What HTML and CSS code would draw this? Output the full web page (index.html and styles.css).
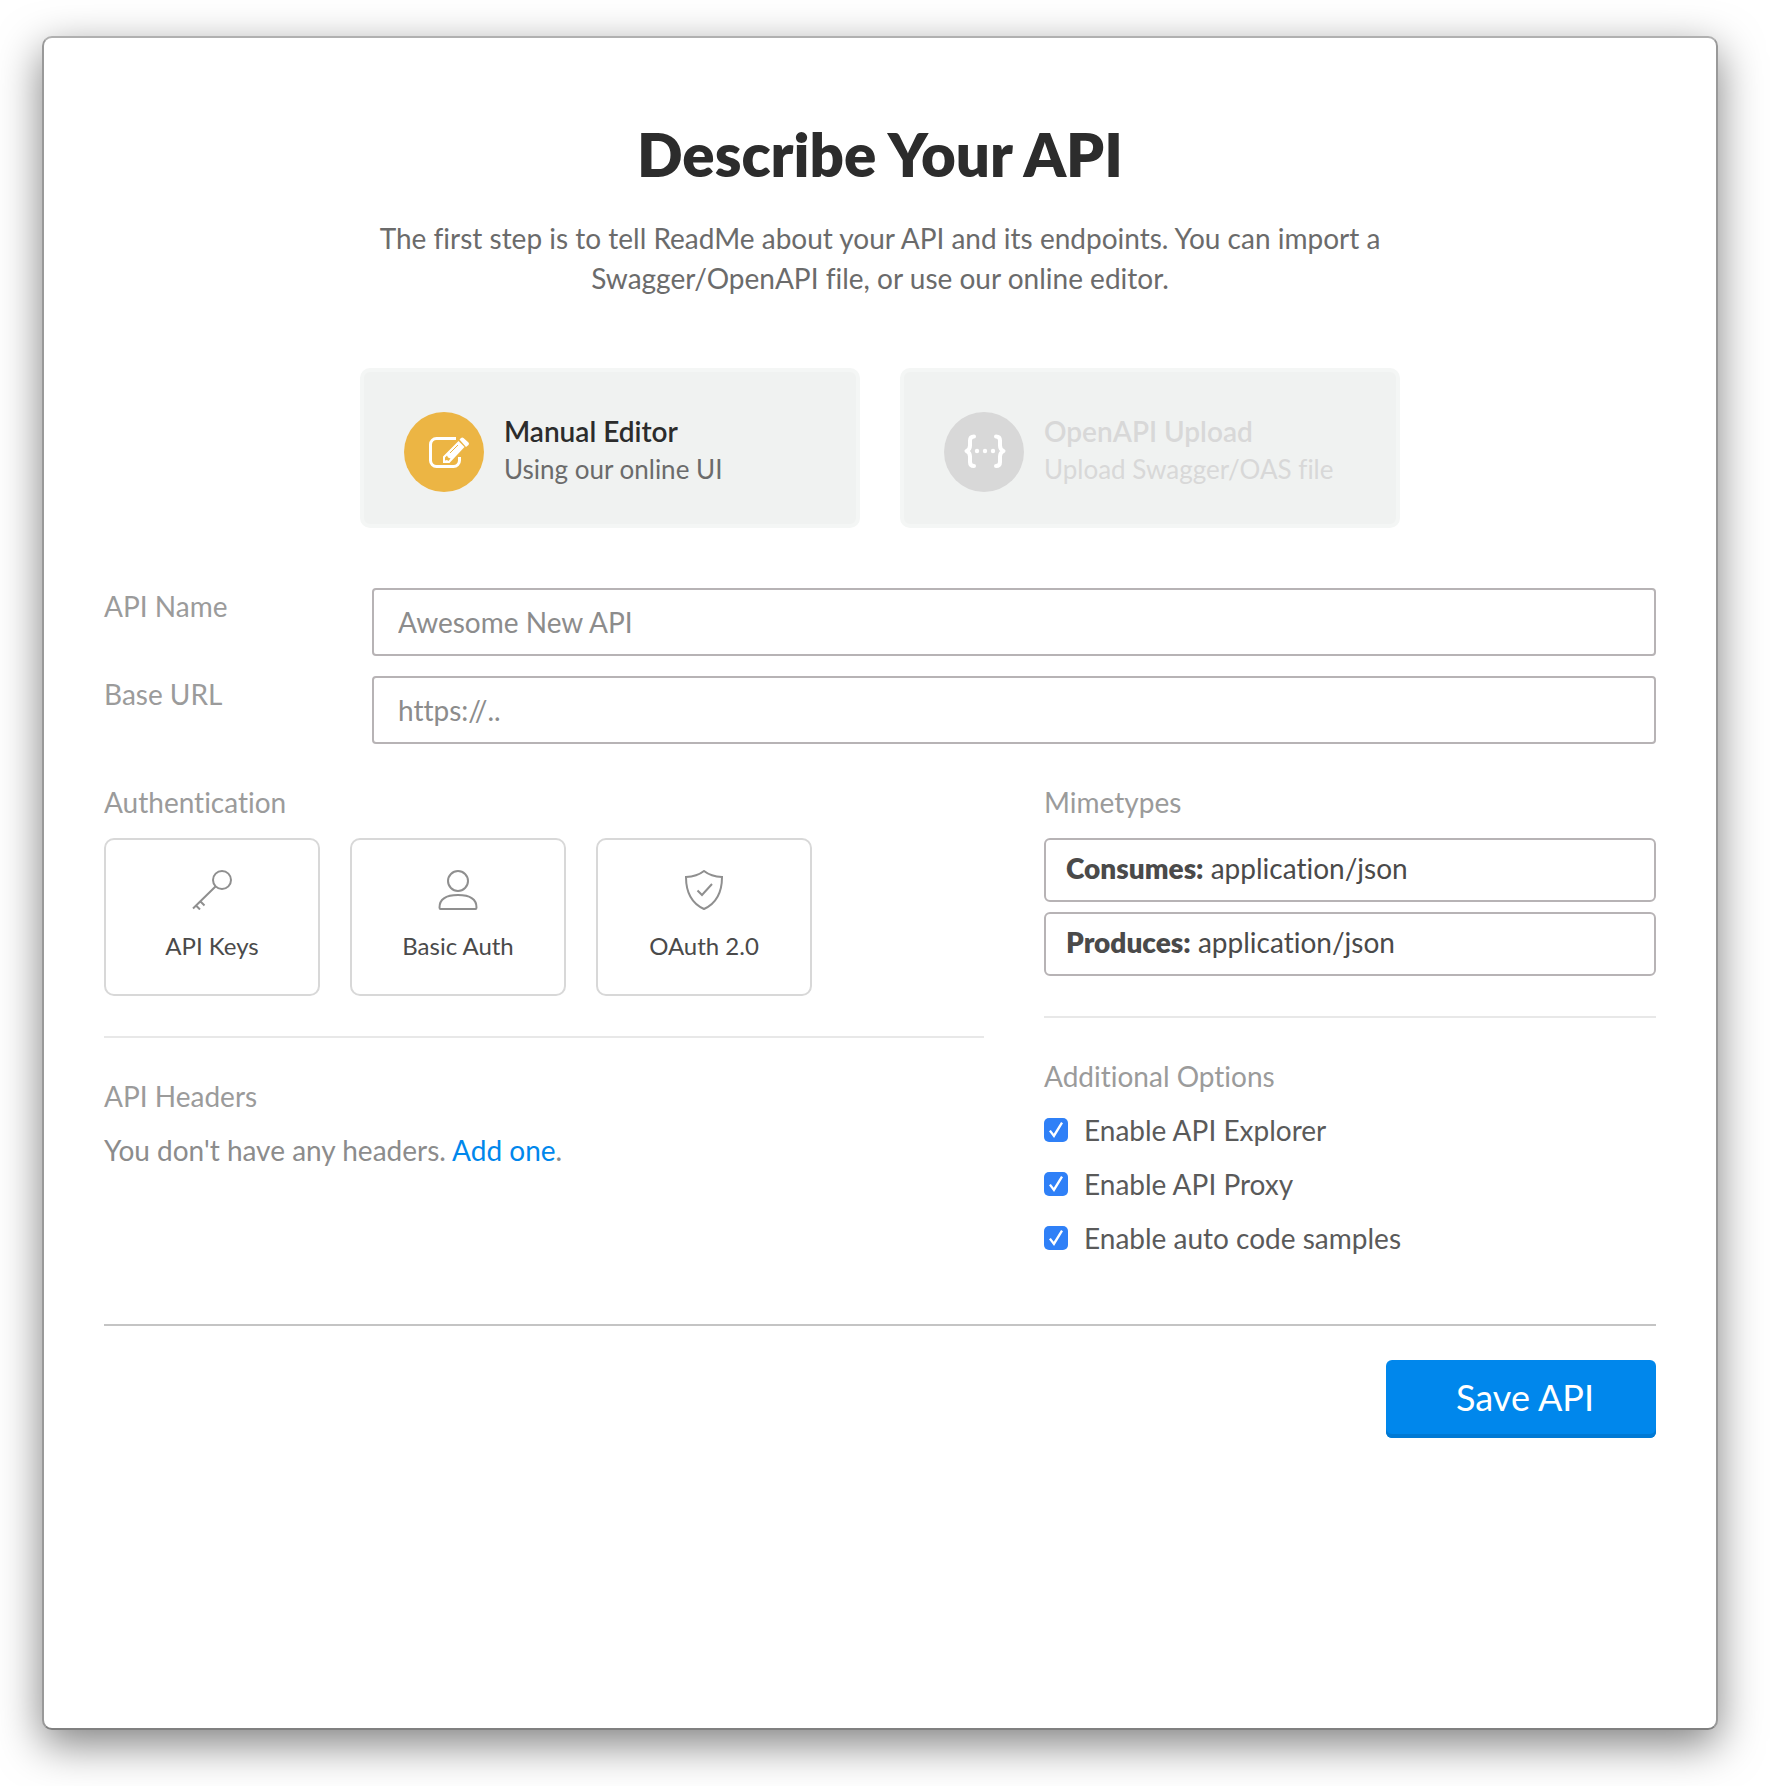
FILE: index.html
```html
<!DOCTYPE html>
<html lang="en">
<head>
<meta charset="utf-8">
<meta name="viewport" content="width=device-width, initial-scale=1">
<title>Describe Your API</title>
<link rel="stylesheet" href="styles.css">
</head>
<body>
<main class="window">
  <header class="intro">
    <h1 class="intro-title">Describe Your API</h1>
    <p class="intro-text">The first step is to tell ReadMe about your API and its endpoints. You can import a Swagger/OpenAPI file, or use our online editor.</p>
  </header>

  <div class="methods">
    <button type="button" class="method">
      <svg class="method-icon" viewBox="0 0 80 80" aria-hidden="true">
        <circle cx="40" cy="40" r="40" fill="#ecb544"/>
        <path d="M52 26.500H32.500a6 6 0 0 0-6 6v16a6 6 0 0 0 6 6h17a6 6 0 0 0 6-6V45" fill="none" stroke="#fff" stroke-width="3"/>
        <path d="M39 51v-6.500l15.500-15.500 6 6L45.500 51zM55.500 27.500l1.500-1.500q1.200-1 2.500 0l5 4.500q1 1.200 0 2.500L62 35z" fill="#fff"/>
        <path d="M46 41l8-8" stroke="#ecb544" stroke-width="1"/>
        <path d="M41 45.500l2-2 1 2 2.500 1-2 2.500-1.500-1-2 .500z" fill="#ecb544"/>
      </svg>
      <span class="method-text">
        <span class="method-name">Manual Editor</span>
        <span class="method-note">Using our online UI</span>
      </span>
    </button>
    <button type="button" class="method method-off">
      <svg class="method-icon" viewBox="0 0 80 80" aria-hidden="true">
        <circle cx="40" cy="40" r="40" fill="#d8d8d8"/>
        <g fill="none" stroke="#fff" stroke-width="4" stroke-linecap="round" stroke-linejoin="round">
          <path d="M30 24.500q-4 0-4 4v5q0 4-3.500 5.500 3.500 1.500 3.500 5.500v5.500q0 4 4 4"/>
          <path d="M52 24.500q4 0 4 4v5q0 4 3.500 5.500-3.500 1.500-3.500 5.500v5.500q0 4-4 4"/>
        </g>
        <g fill="#fff"><circle cx="33" cy="39" r="2.200"/><circle cx="41" cy="39" r="2.200"/><circle cx="49" cy="39" r="2.200"/></g>
      </svg>
      <span class="method-text">
        <span class="method-name">OpenAPI Upload</span>
        <span class="method-note">Upload Swagger/OAS file</span>
      </span>
    </button>
  </div>

  <form class="form">
    <div class="field">
      <label class="label" for="api-name">API Name</label>
      <input class="input" id="api-name" type="text" placeholder="Awesome New API">
    </div>
    <div class="field">
      <label class="label" for="base-url">Base URL</label>
      <input class="input" id="base-url" type="text" placeholder="https://..">
    </div>

    <div class="columns">
      <div class="column">
        <section class="section">
          <h2 class="label">Authentication</h2>
          <div class="auths">
            <button type="button" class="auth">
              <svg class="auth-icon" viewBox="0 0 40 40" aria-hidden="true"><circle cx="30" cy="10" r="9"/><path d="M23.500 16.500L1 38.500M4 35.500l4 4M8.500 31.500l4 4"/></svg>
              API Keys
            </button>
            <button type="button" class="auth">
              <svg class="auth-icon" viewBox="0 0 40 40" aria-hidden="true"><circle cx="20" cy="11" r="10"/><path d="M2.500 39q-1 0-1-1.500C1.500 29 8 25 20 25s18.500 4 18.500 12.500q0 1.500-1 1.500z"/></svg>
              Basic Auth
            </button>
            <button type="button" class="auth">
              <svg class="auth-icon" viewBox="0 0 40 40" aria-hidden="true"><path d="M20 1q7 5.500 18 6C38 24 31 34 20 39 9 34 2 24 2 7q11-.500 18-6zM13.500 20.500l4.500 4.500 10-11"/></svg>
              OAuth 2.0
            </button>
          </div>
        </section>
        <section class="section section-ruled">
          <h2 class="label">API Headers</h2>
          <p class="empty">You don't have any headers. <a class="link" href="#add-header">Add one</a>.</p>
        </section>
      </div>
      <div class="column">
        <section class="section">
          <h2 class="label">Mimetypes</h2>
          <div class="mimes">
            <button type="button" class="mime"><b class="mime-kind">Consumes:</b> application/json</button>
            <button type="button" class="mime"><b class="mime-kind">Produces:</b> application/json</button>
          </div>
        </section>
        <section class="section section-ruled">
          <h2 class="label">Additional Options</h2>
          <div class="options">
            <label class="option"><input class="check" type="checkbox" checked>Enable API Explorer</label>
            <label class="option"><input class="check" type="checkbox" checked>Enable API Proxy</label>
            <label class="option"><input class="check" type="checkbox" checked>Enable auto code samples</label>
          </div>
        </section>
      </div>
    </div>

    <footer class="actions">
      <button type="submit" class="save">Save API</button>
    </footer>
  </form>
</main>
</body>
</html>
```
FILE: styles.css
```css
* {
  box-sizing: border-box;
}

body {
  margin: 0;
  padding: 36px 54px 56px 42px;
  background: #fff;
  color: #4a4a4a;
  font-family: Lato, "Open Sans", sans-serif;
  font-size: 28px;
  font-variant-ligatures: none;
  line-height: 40px;
}

h1,
h2,
p {
  margin: 0;
}

button,
input {
  font: inherit;
  font-variant-ligatures: none;
  color: inherit;
}

button {
  padding: 0;
  cursor: pointer;
}

.window {
  min-height: calc(100vh - 92px);
  padding: 80px 60px 60px;
  border: 2px solid;
  border-color: #b0b0b0 #999 #808080;
  border-radius: 10px;
  background: #fff;
  box-shadow: 0 14px 44px rgba(0, 0, 0, 0.5);
}

.intro {
  max-width: 1040px;
  margin: 0 auto 70px;
  text-align: center;
}

.intro-title {
  margin-bottom: 28px;
  color: #2c2c2c;
  font-size: 60px;
  font-weight: 800;
  line-height: 72px;
}

.intro-text {
  color: #6b6b6b;
}

.methods {
  display: flex;
  justify-content: center;
  gap: 40px;
  margin-bottom: 60px;
}

.method {
  display: flex;
  flex: 0 1 500px;
  align-items: flex-start;
  gap: 20px;
  padding: 40px 40px 32px;
  border: 4px solid #f4f6f5;
  border-radius: 10px;
  background: #f0f2f1;
  text-align: left;
}

.method-icon {
  flex: none;
  width: 80px;
  height: 80px;
}

.method-text {
  display: flex;
  flex-direction: column;
  line-height: 38px;
}

.method-name {
  color: #2c2c2c;
  font-weight: 600;
}

.method-note {
  color: #6b6b6b;
  font-size: 26px;
}

.method-off .method-name,
.method-off .method-note {
  color: #d8d8d8;
}

.form {
  display: flex;
  flex-direction: column;
  gap: 20px;
}

.field {
  display: grid;
  grid-template-columns: 268px 1fr;
}

.label {
  color: #9b9b9b;
  font-size: 28px;
  font-weight: 400;
  line-height: 36px;
}

.input {
  width: 100%;
  height: 68px;
  padding: 0 24px;
  border: 2px solid #b7b3b5;
  border-radius: 4px;
  background: #fff;
}

.input::placeholder {
  color: #8c8c8c;
  opacity: 1;
}

.columns {
  display: grid;
  grid-template-columns: 880fr 612fr;
  gap: 60px;
  margin-top: 20px;
}

.section {
  display: flex;
  flex-direction: column;
  gap: 18px;
}

.section-ruled {
  gap: 16px;
  margin-top: 40px;
  padding-top: 40px;
  border-top: 2px solid #e8e8e8;
}

.auths {
  display: flex;
  gap: 30px;
}

.auth {
  display: flex;
  flex: 0 1 216px;
  flex-direction: column;
  align-items: center;
  gap: 16px;
  padding: 30px 0 28px;
  border: 2px solid #d8d8d8;
  border-radius: 10px;
  background: #fff;
  font-size: 24px;
}

.auth-icon {
  width: 40px;
  height: 40px;
  fill: none;
  stroke: #8f8f8f;
  stroke-width: 2px;
}

.empty {
  color: #8c8c8c;
}

.link {
  color: #0087ec;
  text-decoration: none;
}

.mimes {
  display: flex;
  flex-direction: column;
  gap: 10px;
}

.mime {
  padding: 8px 20px 12px;
  border: 2px solid #b7b3b5;
  border-radius: 6px;
  background: #fff;
  text-align: left;
}

.mime-kind {
  font-weight: 800;
}

.options {
  display: flex;
  flex-direction: column;
  gap: 14px;
}

.option {
  display: flex;
  align-items: center;
  gap: 16px;
  color: #5a5a5a;
}

.check {
  display: grid;
  width: 24px;
  height: 24px;
  margin: 0;
  border-radius: 5px;
  background: #2f80f7;
  appearance: none;
  place-items: center;
}

.check:checked::before {
  width: 14px;
  height: 16px;
  background: #fff;
  clip-path: polygon(0 58%, 13% 50%, 34% 74%, 86% 0, 100% 8%, 36% 100%);
  content: "";
}

.actions {
  display: flex;
  justify-content: flex-end;
  margin-top: 46px;
  padding-top: 34px;
  border-top: 2px solid #c4c4c4;
}

.save {
  width: 270px;
  height: 78px;
  padding: 0 0 4px 8px;
  border: 0;
  border-radius: 6px;
  background: #0087ec;
  box-shadow: inset 0 -4px #0079d4;
  color: #fff;
  font-size: 36px;
}
```
